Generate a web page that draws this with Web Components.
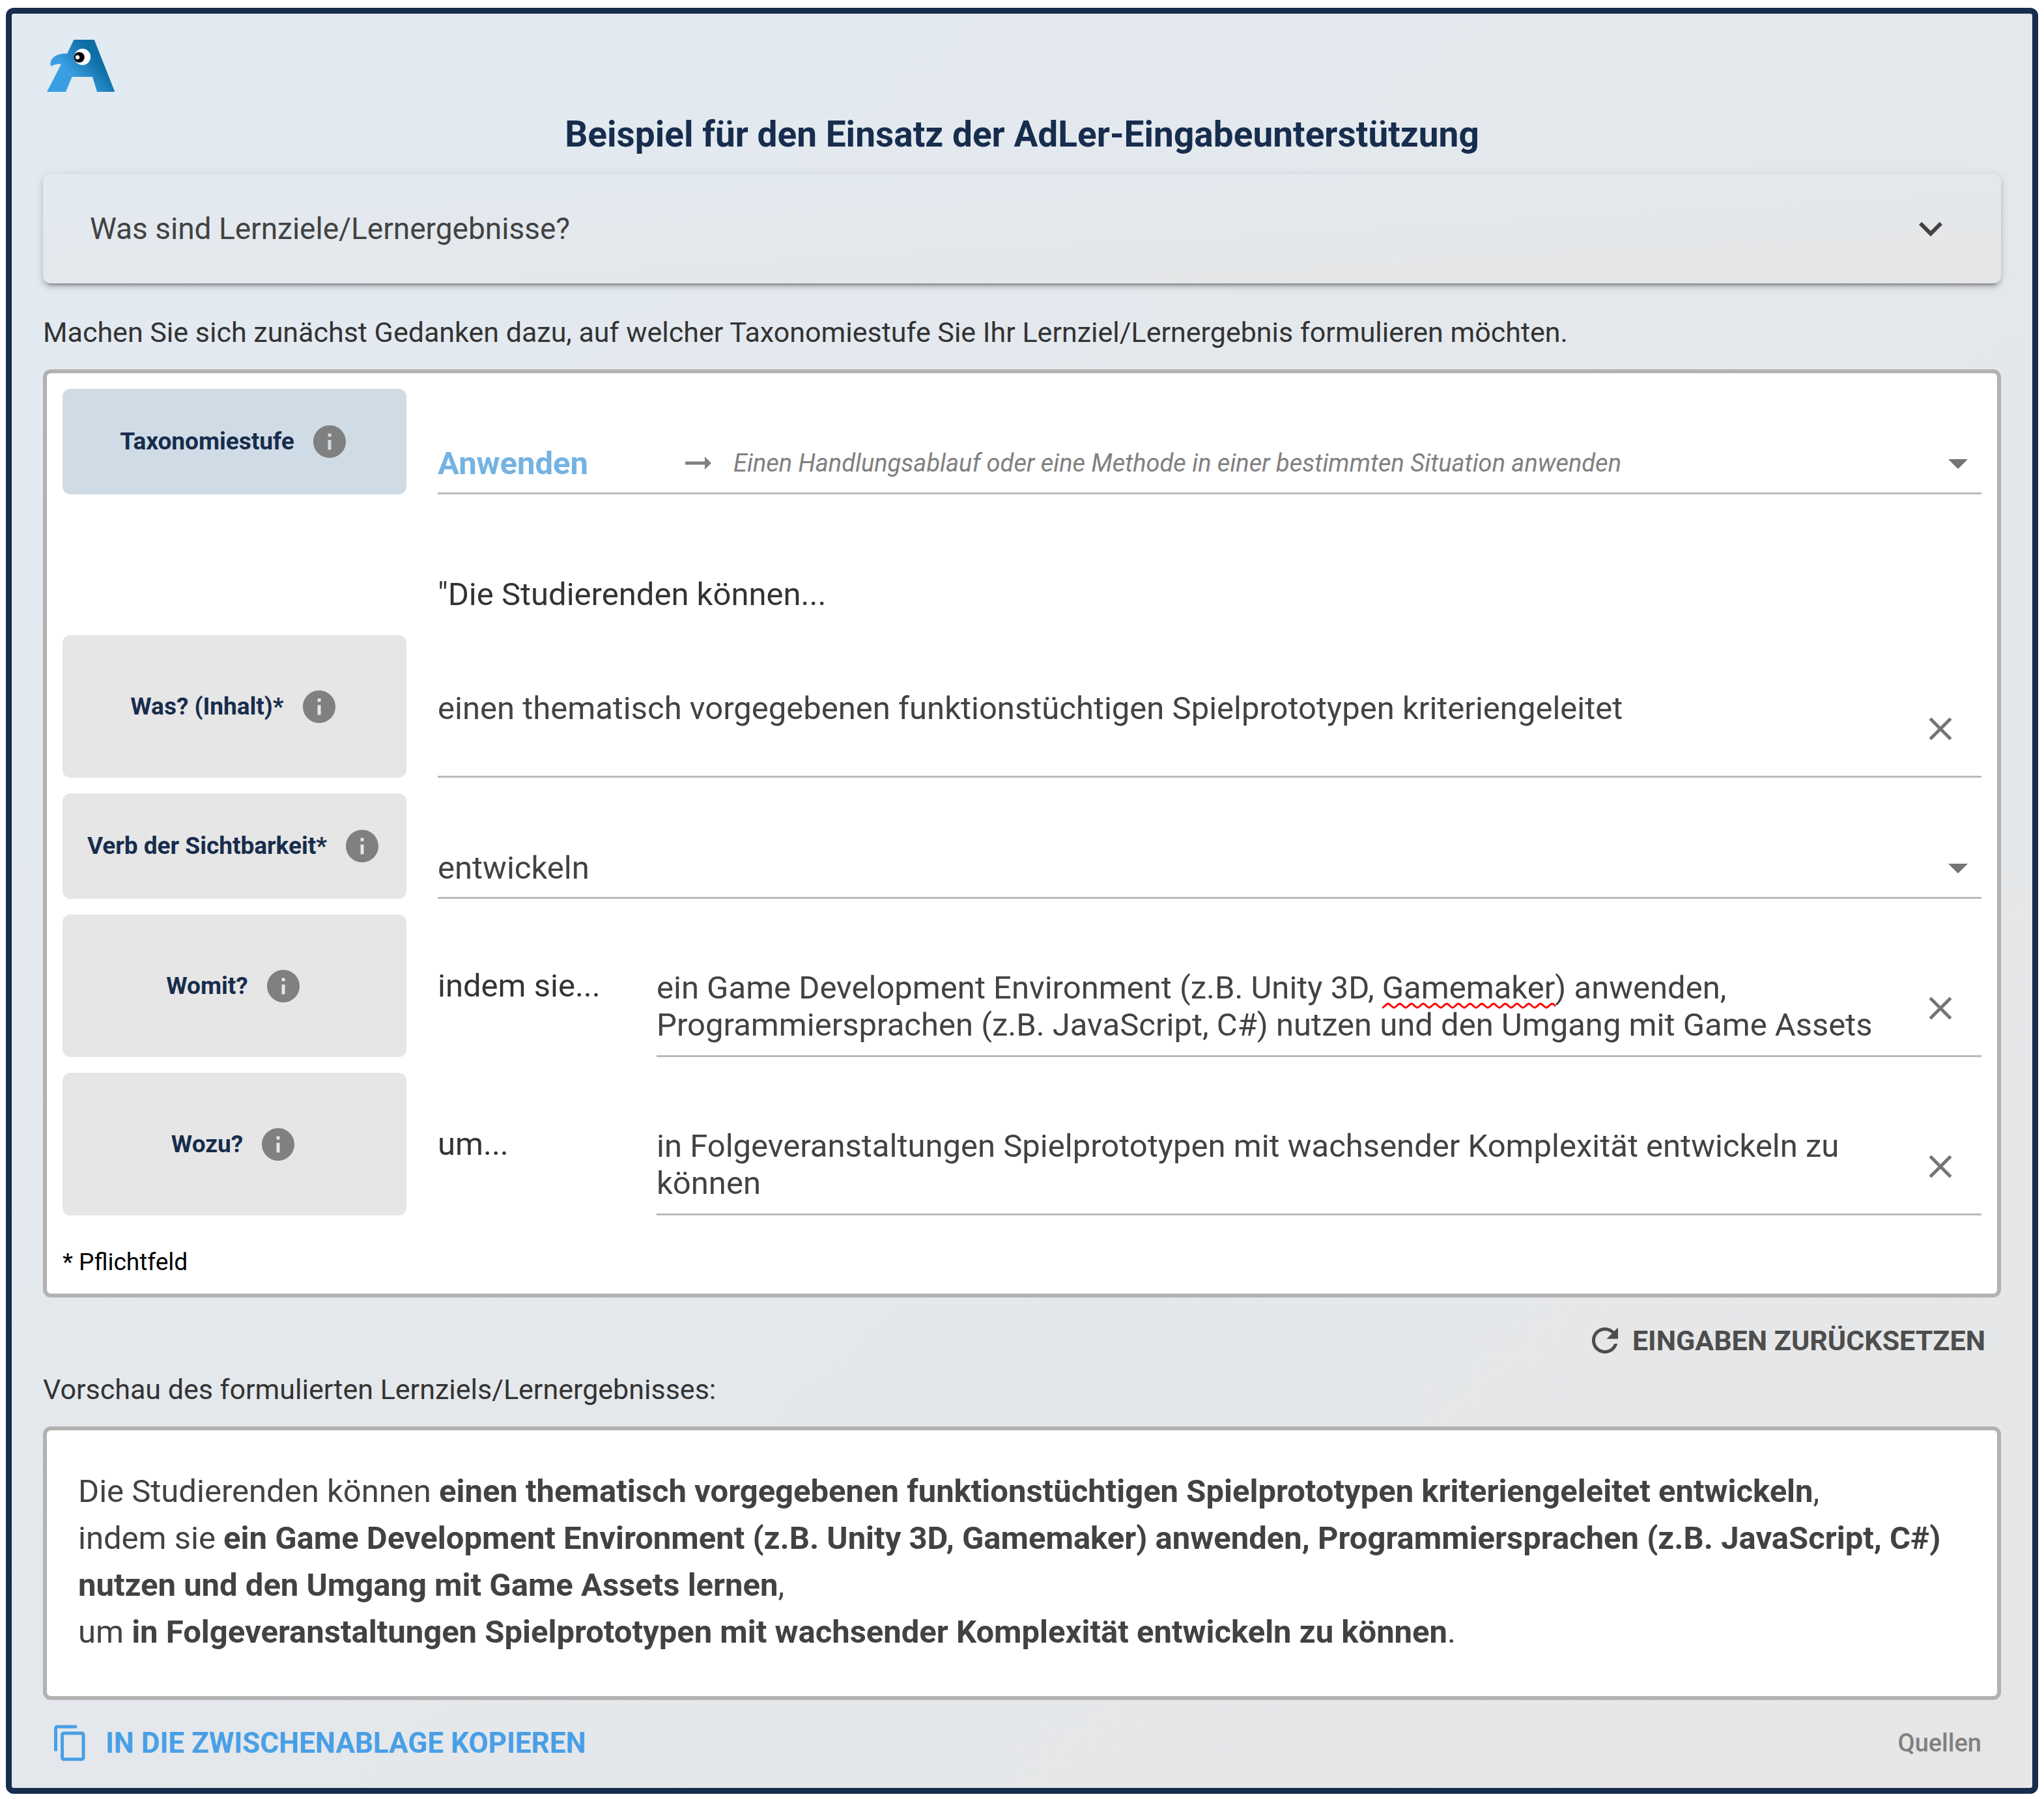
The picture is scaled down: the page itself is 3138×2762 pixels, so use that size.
<!DOCTYPE html>
<html lang="de">
<head>
<meta charset="utf-8">
<title>AdLer-Eingabeunterstützung</title>
<style>
  html { background: #fff; }
  body { margin: 12px 9px 8px; font-family: Roboto, "Liberation Sans", sans-serif; color: #333; }
</style>
</head>
<body>
<adler-app>
  <adler-accordion>Was sind Lernziele/Lernergebnisse?</adler-accordion>
  <adler-hint>Machen Sie sich zunächst Gedanken dazu, auf welcher Taxonomiestufe Sie Ihr Lernziel/Lernergebnis formulieren möchten.</adler-hint>
  <adler-panel>
    <adler-row kind="select" tone="primary" label="Taxonomiestufe" value="Anwenden" note="Einen Handlungsablauf oder eine Methode in einer bestimmten Situation anwenden"></adler-row>
    <adler-lead>"Die Studierenden können...</adler-lead>
    <adler-row kind="text" label="Was? (Inhalt)*" value="einen thematisch vorgegebenen funktionstüchtigen Spielprototypen kriteriengeleitet"></adler-row>
    <adler-row kind="select" label="Verb der Sichtbarkeit*" value="entwickeln"></adler-row>
    <adler-row kind="text" label="Womit?" prefix="indem sie..." misspelt="Gamemaker" value="ein Game Development Environment (z.B. Unity 3D, Gamemaker) anwenden, Programmiersprachen (z.B. JavaScript, C#) nutzen und den Umgang mit Game Assets lernen"></adler-row>
    <adler-row kind="text" label="Wozu?" prefix="um..." value="in Folgeveranstaltungen Spielprototypen mit wachsender Komplexität entwickeln zu können"></adler-row>
    <span slot="foot">* Pflichtfeld</span>
  </adler-panel>
  <adler-toolbar>
    <adler-action slot="end" icon="refresh">EINGABEN ZURÜCKSETZEN</adler-action>
  </adler-toolbar>
  <adler-hint class="preview-hint">Vorschau des formulierten Lernziels/Lernergebnisses:</adler-hint>
  <adler-preview>
    Die Studierenden können <b>einen thematisch vorgegebenen funktionstüchtigen Spielprototypen kriteriengeleitet entwickeln</b>,<br>
    indem sie <b>ein Game Development Environment (z.B. Unity 3D, Gamemaker) anwenden, Programmiersprachen (z.B. JavaScript, C#)</b> <b>nutzen und den Umgang mit Game Assets lernen</b>,<br>
    um <b>in Folgeveranstaltungen Spielprototypen mit wachsender Komplexität entwickeln zu können</b>.
  </adler-preview>
  <adler-toolbar>
    <adler-action icon="copy" tone="primary">IN DIE ZWISCHENABLAGE KOPIEREN</adler-action>
    <adler-sources slot="end">Quellen</adler-sources>
  </adler-toolbar>
</adler-app>

<script>
const ICONS = {
  more: 'M16.59 8.59L12 13.17 7.41 8.59 6 10l6 6 6-6z',
  drop: 'M7 10l5 5 5-5z',
  close: 'M19 6.41L17.59 5 12 10.59 6.41 5 5 6.41 10.59 12 5 17.59 6.41 19 12 13.41 17.59 19 19 17.59 13.41 12z',
  arrow: 'M16.01 11H4v2h12.01v3L20 12l-3.99-4z',
  info: 'M12 2C6.48 2 2 6.48 2 12s4.48 10 10 10 10-4.48 10-10S17.52 2 12 2zm1 15h-2v-6h2v6zm0-8h-2V7h2v2z',
  refresh: 'M17.65 6.35C16.2 4.9 14.21 4 12 4c-4.42 0-7.99 3.58-7.99 8s3.57 8 7.99 8c3.73 0 6.84-2.55 7.73-6h-2.08c-.82 2.33-3.04 4-5.65 4-3.31 0-6-2.69-6-6s2.69-6 6-6c1.66 0 3.14.69 4.22 1.78L13 11h7V4l-2.35 2.35z',
  copy: 'M16 1H4c-1.1 0-2 .9-2 2v14h2V3h12V1zm3 4H8c-1.1 0-2 .9-2 2v14c0 1.1.9 2 2 2h11c1.1 0 2-.9 2-2V7c0-1.1-.9-2-2-2zm0 16H8V7h11v14z'
};

function define(name, html, setup) {
  customElements.define(name, class extends HTMLElement {
    connectedCallback() {
      if (this.shadowRoot) return;
      const root = this.attachShadow({ mode: 'open' });
      root.innerHTML = typeof html === 'function' ? html(this) : html;
      if (setup) setup(this, root);
    }
  });
}

define('adler-icon', el => `
<style>
  :host { display: block; flex: none; width: 60px; height: 60px; }
  :host([large]) { width: 72px; height: 72px; }
  svg { display: block; width: 100%; height: 100%; fill: currentColor; }
</style>
<svg viewBox="0 0 24 24" aria-hidden="true"><path d="${ICONS[el.getAttribute('name')]}"/></svg>`);

define('adler-logo', `
<style>
  :host { display: block; }
  svg { display: block; width: 105px; height: 80px; }
</style>
<svg viewBox="72 61 105 80" role="img" aria-label="AdLer">
  <defs><linearGradient id="g" gradientUnits="userSpaceOnUse" x1="106" y1="111" x2="141" y2="82">
    <stop offset="0" stop-color="#3a9fe2"/><stop offset="1" stop-color="#0e6ea5"/>
  </linearGradient></defs>
  <path fill="url(#g)" d="M113.300 61H144.700L176.300 141H149L142 118H110.700L101 141H72L94 98.500C88 97.500 83 99 79 101.500C77.500 101.500 77 99 77.500 96C79 87 91 81 103 82.500Z"/>
  <circle cx="126.600" cy="87.300" r="12.500" fill="#fff"/>
  <circle cx="121.700" cy="88" r="8" fill="#000"/>
  <circle cx="119" cy="88" r="3.200" fill="#fff"/>
</svg>`);

define('adler-app', `
<style>
  :host { display: block; border: 9px solid #172d4d; border-radius: 12px; padding: 40px 48px 33px;
    background: linear-gradient(to bottom right, #e2eaf2, #e6e6e6); }
  adler-logo { margin-left: 6px; }
  h1 { margin: 33px 0 29px; font-size: 55px; line-height: 64px; font-weight: 700; text-align: center; color: #172d4d; }
</style>
<header><adler-logo></adler-logo><h1>Beispiel für den Einsatz der AdLer-Eingabeunterstützung</h1></header>
<main><slot></slot></main>`);

define('adler-accordion', `
<style>
  :host { display: block; border-radius: 12px; background: linear-gradient(to bottom right, #e2eaf2, #e6e6e6);
    box-shadow: 0 9px 3px -6px rgba(0,0,0,.2), 0 6px 6px rgba(0,0,0,.14), 0 3px 15px rgba(0,0,0,.12); }
  button { display: flex; align-items: center; justify-content: space-between; width: 100%; padding: 48px 72px;
    border: 0; background: none; font: inherit; font-size: 46px; line-height: 72px; color: #424242; text-align: left; }
</style>
<button type="button" aria-expanded="false"><span><slot></slot></span><adler-icon name="more" large></adler-icon></button>`);

define('adler-hint', `
<style>
  :host { display: block; padding: 44px 0 26px; font-size: 43px; line-height: 62px; color: #333; }
  :host(.preview-hint) { padding-top: 8px; }
</style>
<slot></slot>`);

define('adler-panel', `
<style>
  :host { display: block; padding: 24px; border: 6px solid #b2b2b2; border-radius: 12px; background: #fff; }
  form { display: flex; flex-direction: column; gap: 24px; }
  p { margin: 48px 0 0; font-size: 37px; line-height: 48px; color: #000; }
</style>
<form><slot></slot></form>
<p><slot name="foot"></slot></p>`);

define('adler-lead', `
<style>
  :host { display: block; padding: 92px 0 0 576px; font-size: 49px; line-height: 76px; color: #333; }
</style>
<slot></slot>`);

define('adler-row', el => {
  const a = n => (el.getAttribute(n) || '').replace(/"/g, '&quot;');
  const control = a('kind') === 'select'
    ? `<div class="select">
         <select id="field"><option>${a('value')}</option></select>
         ${a('note') ? `<span class="note"><adler-icon name="arrow"></adler-icon><i>${a('note')}</i></span>` : ''}
         <adler-icon class="drop" name="drop" large></adler-icon>
       </div>`
    : `<div class="text">
         <textarea id="field" rows="2" spellcheck="false">${a('value')}</textarea>
         <button class="clear" type="button" aria-label="Feld leeren"><adler-icon name="close"></adler-icon></button>
       </div>`;
  return `
<style>
  :host { display: flex; gap: 48px; }
  .head { display: flex; flex: none; box-sizing: border-box; width: 528px; align-items: center; justify-content: center;
    gap: 24px; border-radius: 12px; background: #e6e6e6; color: #172d4d; font-size: 37px; line-height: 54px; font-weight: 700; }
  :host([tone="primary"]) .head { background: #d0dce5; }
  button { padding: 0; border: 0; background: none; color: #808080; }
  .prefix { flex: none; align-self: center; width: 288px; font-size: 49px; line-height: 72px; color: #333; }
  .select, .text { flex: 1; min-width: 0; border-bottom: 3px solid #bababa; }
  select, textarea { display: block; box-sizing: border-box; width: 100%; margin: 0; padding: 0; border: 0; background: none;
    font: inherit; font-size: 49px; line-height: 57px; color: #424242; outline: 0; appearance: none; }
  .select { display: grid; grid-template-columns: 370px 1fr; padding: 78px 0 9px; align-items: center; }
  select { grid-area: 1 / 1 / 2 / 3; height: 72px; }
  :host([tone="primary"]) select { font-weight: 700; color: #74b3e3; }
  .note, .drop { pointer-events: none; }
  .note { grid-area: 1 / 2; display: flex; align-items: center; gap: 24px; font-size: 38px; line-height: 54px; color: #808080; }
  .drop { grid-area: 1 / 2; justify-self: end; color: #757575; }
  .text { display: flex; position: relative; padding: 84px 33px 18px 0; gap: 57px; }
  textarea { flex: 1; height: 114px; resize: none; overflow: hidden; }
  .clear { color: #757575; align-self: flex-end; padding-bottom: 24px; }
  .squiggle { position: absolute; height: 10px; pointer-events: none; }
</style>
<div class="head"><label for="field">${a('label')}</label><button type="button" aria-label="Hilfe: ${a('label')}"><adler-icon name="info"></adler-icon></button></div>
${a('prefix') ? `<span class="prefix">${a('prefix')}</span>` : ''}
${control}`;
}, (el, root) => {
  const word = el.getAttribute('misspelt');
  if (!word) return;
  // Underline a misspelt word: its place is measured with the field's own font.
  const field = root.getElementById('field');
  const ctx = document.createElement('canvas').getContext('2d');
  const cs = getComputedStyle(field);
  ctx.font = `${cs.fontWeight} ${cs.fontSize} ${cs.fontFamily}`;
  const left = Math.round(ctx.measureText(field.value.slice(0, field.value.indexOf(word))).width);
  const width = Math.round(ctx.measureText(word).width);
  const wave = 'M0 8' + 'c3 0 6 -6 9 -6s6 6 9 6'.repeat(Math.ceil(width / 18));
  root.querySelector('.text').insertAdjacentHTML('beforeend',
    `<svg class="squiggle" style="left:${left}px;top:135px;width:${width}px" aria-hidden="true"><path d="${wave}" fill="none" stroke="#f00" stroke-width="3"/></svg>`);
});

define('adler-toolbar', `
<style>
  :host { display: flex; justify-content: space-between; align-items: center; padding-top: 30px; }
</style>
<div><slot></slot></div><div><slot name="end"></slot></div>`);

define('adler-action', `
<style>
  :host { display: block; }
  button { display: flex; align-items: center; gap: 12px; height: 72px; padding: 0 24px 0 12px; border: 0; background: none;
    font: inherit; font-size: 43px; line-height: 72px; font-weight: 700; color: #4d4d4d; }
  :host([tone="primary"]) button { gap: 24px; font-size: 44px; color: #499fe6; }
</style>
<button type="button"></button>`, (el, root) => {
  root.querySelector('button').innerHTML = `<adler-icon name="${el.getAttribute('icon')}"></adler-icon><span><slot></slot></span>`;
});

define('adler-preview', `
<style>
  :host { display: block; padding: 58px 48px 62px; border: 6px solid #b2b2b2; border-radius: 12px; background: #fff;
    font-size: 49px; line-height: 72px; color: #424242; }
</style>
<slot></slot>`);

define('adler-sources', `
<style>
  :host { display: block; padding-right: 30px; }
  a { font-size: 38px; line-height: 72px; font-weight: 500; color: #808080; text-decoration: none; }
</style>
<a href="#quellen"><slot></slot></a>`);
</script>
</body>
</html>
